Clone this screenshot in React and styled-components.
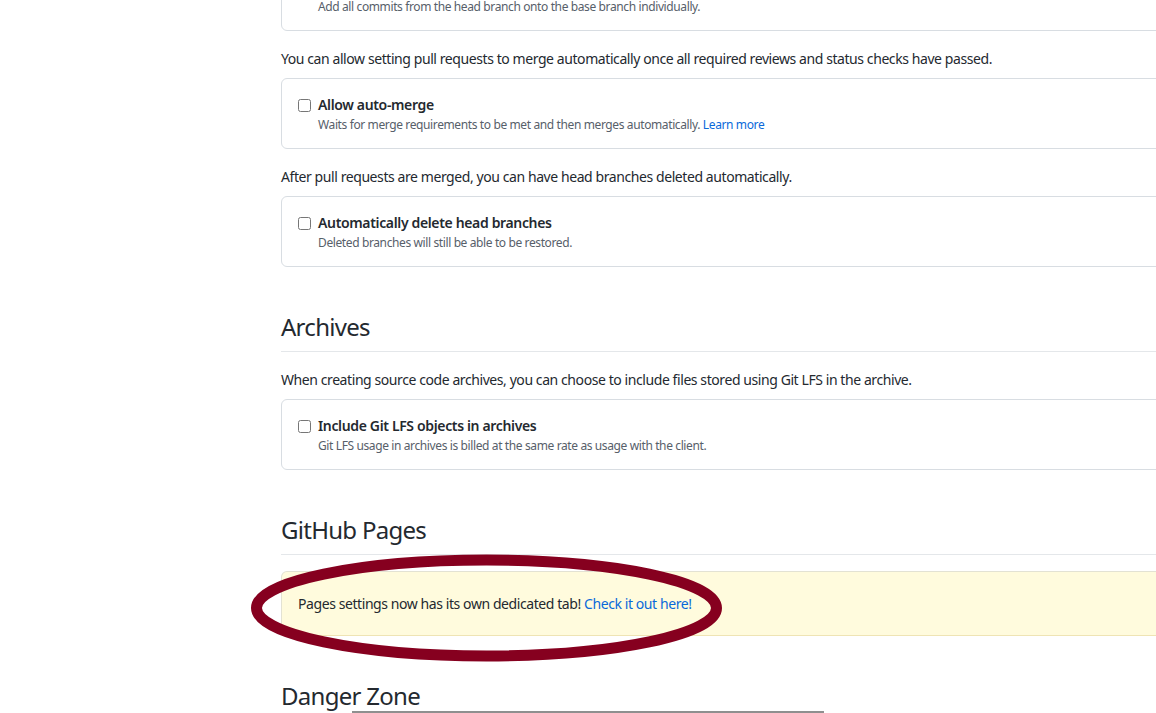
import React from 'react';
import styled, { createGlobalStyle } from 'styled-components';

const GlobalStyle = createGlobalStyle`
	html, body {
		margin: 0;
		padding: 0;
		background: #ffffff;
		overflow: hidden;
	}
	body {
		font-family: "Noto Sans", "Open Sans", sans-serif;
		color: #24292f;
		font-size: 14px;
		line-height: 1.5;
		letter-spacing: -0.03em;
	}
`;

const Page = styled.div`
	position: relative;
	width: 1156px;
	height: 713px;
	overflow: hidden;
`;

const Content = styled.div`
	width: 1000px;
	padding-left: 281px;
	margin-top: -40px;
`;

const Subhead = styled.h2`
	margin: 40px 0 0;
	padding: 2px 0 6px;
	border-bottom: 1px solid #e4e7ea;
	font-size: 24px;
	font-weight: 400;
	line-height: 36px;
	letter-spacing: -0.03em;
`;

const Note = styled.p`
	margin: 17px 0 9px;
	line-height: 21px;
`;

const OptionBox = styled.div`
	border: 1px solid #d8dde2;
	border-radius: 6px;
	padding: 16px 16px 14px;
`;

const OptionRow = styled.label`
	display: flex;
	align-items: flex-start;
	gap: 7px;
`;

const Check = styled.input`
	width: 13px;
	height: 13px;
	margin: 4px 0 0;
	flex: none;
`;

const OptionText = styled.div`
	display: flex;
	flex-direction: column;
`;

const OptionTitle = styled.span`
	font-weight: 600;
	line-height: 20px;
	letter-spacing: -0.025em;
`;

const OptionHint = styled.span`
	font-size: 12px;
	color: #57606a;
	line-height: 18px;
	margin-top: 1px;
	letter-spacing: -0.032em;
`;

const Link = styled.a`
	color: #0969da;
	text-decoration: none;
`;

const Flash = styled.div`
	margin-top: 16px;
	padding: 21px 16px;
	background: #fffbdd;
	border: 1px solid #e3e2d3;
	border-bottom-color: #efe4b4;
	border-radius: 6px;
	line-height: 21px;
`;

const Annotation = styled.svg`
	position: absolute;
	left: 0;
	top: 0;
	pointer-events: none;
`;

const ScrollThumb = styled.div`
	position: absolute;
	left: 352px;
	bottom: 0;
	width: 472px;
	height: 2px;
	background: #8f8f8f;
`;

const Option = ({ title, hint, link }) => (
	<OptionBox>
		<OptionRow>
			<Check type="checkbox" readOnly />
			<OptionText>
				<OptionTitle>{title}</OptionTitle>
				<OptionHint>
					{hint}
					{link && <> <Link href="#">{link}</Link></>}
				</OptionHint>
			</OptionText>
		</OptionRow>
	</OptionBox>
);

export default function App() {
	return (
		<Page>
			<GlobalStyle />
			<Content>
				<Option
					title="Allow rebase merging"
					hint="Add all commits from the head branch onto the base branch individually."
				/>
				<Note>
					You can allow setting pull requests to merge automatically once all required reviews and status checks have passed.
				</Note>
				<Option
					title="Allow auto-merge"
					hint="Waits for merge requirements to be met and then merges automatically."
					link="Learn more"
				/>
				<Note>After pull requests are merged, you can have head branches deleted automatically.</Note>
				<Option
					title="Automatically delete head branches"
					hint="Deleted branches will still be able to be restored."
				/>

				<Subhead>Archives</Subhead>
				<Note>
					When creating source code archives, you can choose to include files stored using Git LFS in the archive.
				</Note>
				<Option
					title="Include Git LFS objects in archives"
					hint="Git LFS usage in archives is billed at the same rate as usage with the client."
				/>

				<Subhead>GitHub Pages</Subhead>
				<Flash>
					Pages settings now has its own dedicated tab! <Link href="#">Check it out here!</Link>
				</Flash>

				<Subhead>Danger Zone</Subhead>
			</Content>

			<Annotation width="1156" height="713" viewBox="0 0 1156 713">
				<ellipse cx="486.5" cy="608" rx="230" ry="48" fill="none" stroke="#86001f" strokeWidth="11" />
			</Annotation>
			<ScrollThumb />
		</Page>
	);
}
